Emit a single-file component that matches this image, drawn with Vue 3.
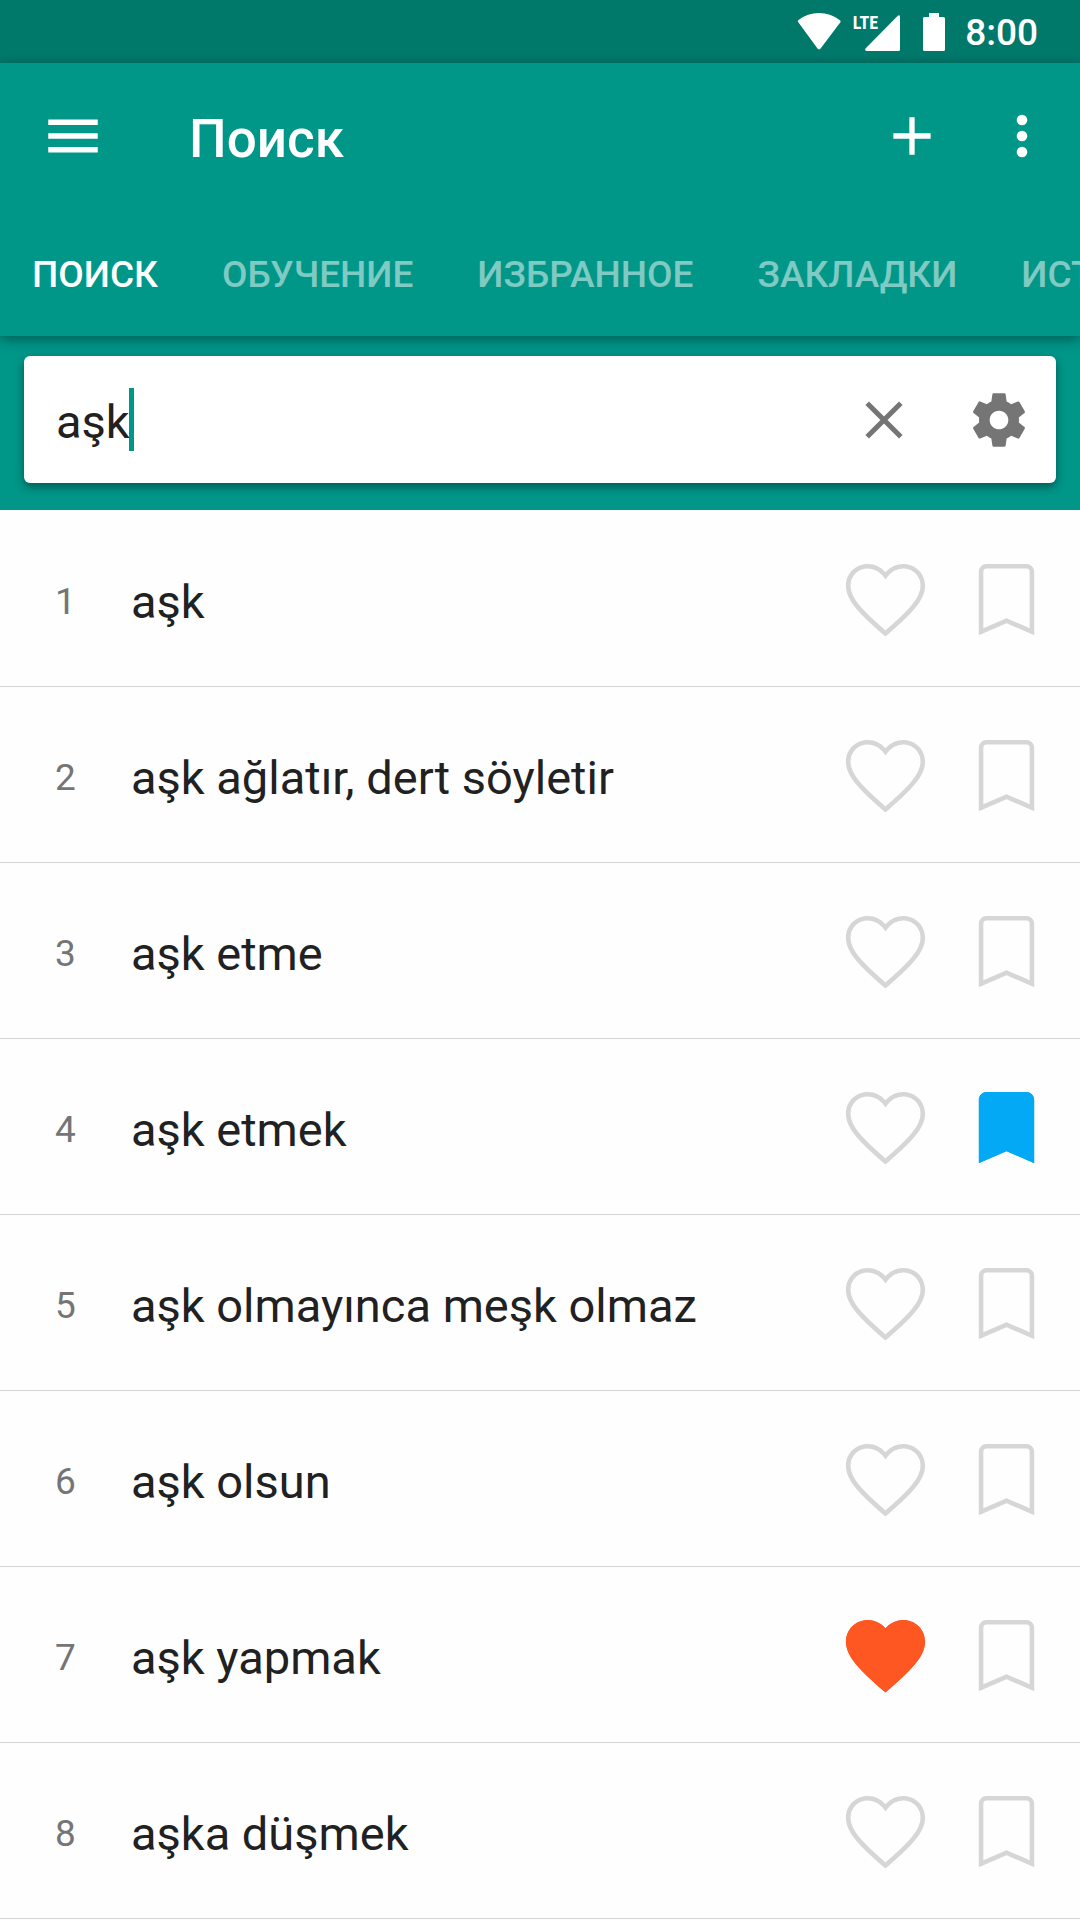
<script setup>
import { ref } from 'vue'

const query = ref('aşk')
const activeTab = ref('ПОИСК')
const tabs = ['ПОИСК', 'ОБУЧЕНИЕ', 'ИЗБРАННОЕ', 'ЗАКЛАДКИ', 'ИСТОРИЯ']

const words = ref([
  { text: 'aşk', liked: false, marked: false },
  { text: 'aşk ağlatır, dert söyletir', liked: false, marked: false },
  { text: 'aşk etme', liked: false, marked: false },
  { text: 'aşk etmek', liked: false, marked: true },
  { text: 'aşk olmayınca meşk olmaz', liked: false, marked: false },
  { text: 'aşk olsun', liked: false, marked: false },
  { text: 'aşk yapmak', liked: true, marked: false },
  { text: 'aşka düşmek', liked: false, marked: false },
])

const heart =
  'M12 21.35C5.4 15.6 2 12.28 2 8.5 2 5.42 4.42 3 7.5 3c1.74 0 3.41.81 4.5 2.09C13.09 3.81 14.76 3 16.5 3 19.58 3 22 5.42 22 8.5c0 3.78-3.4 7.1-10 12.85z'
const bookmark = 'M17 3H7C5.9 3 5 3.9 5 5v16l7-3 7 3V5c0-1.1-.9-2-2-2z'
</script>

<template>
  <div class="screen">
    <div class="status">
      <svg class="wifi" viewBox="0 0 44 37" aria-hidden="true">
        <path d="M1.5 9.500Q0 8.200 1.500 7Q10.500 0 22 0T42.500 7Q44.500 8.200 43 9.800L23.600 35.500Q22 37.200 20.500 35.500z" />
      </svg>
      <div class="signal">
        <span class="lte">LTE</span>
        <svg viewBox="0 0 35 36" aria-hidden="true">
          <path d="M35 1.500V34.500Q35 36 33.500 36H1.500Q-.500 35.500.500 33.500L32.800.800Q34.500-.500 35 1.500z" />
        </svg>
      </div>
      <svg class="battery" viewBox="0 0 22 38" aria-hidden="true">
        <path d="M6 0h10v4h4.500q1.500 0 1.500 1.500v31q0 1.500-1.500 1.500h-19q-1.500 0-1.500-1.500v-31q0-1.500 1.500-1.500h4.500z" />
      </svg>
      <span class="time">8:00</span>
    </div>

    <header class="appbar">
      <div class="toolbar">
        <button class="icon menu" aria-label="Меню">
          <svg viewBox="0 0 24 24"><path d="M3 18h18v-2H3v2zm0-5h18v-2H3v2zm0-7v2h18V6H3z" /></svg>
        </button>
        <h1>Поиск</h1>
        <button class="icon" aria-label="Добавить">
          <svg viewBox="0 0 24 24"><path d="M19 13h-6v6h-2v-6H5v-2h6V5h2v6h6v2z" /></svg>
        </button>
        <button class="icon" aria-label="Ещё">
          <svg viewBox="0 0 24 24">
            <circle cx="12" cy="6" r="2" />
            <circle cx="12" cy="12" r="2" />
            <circle cx="12" cy="18" r="2" />
          </svg>
        </button>
      </div>
      <nav class="tabs">
        <button
          v-for="tab in tabs"
          :key="tab"
          class="tab"
          :class="{ active: tab === activeTab }"
          @click="activeTab = tab"
        >{{ tab }}</button>
      </nav>
    </header>

    <section class="search">
      <div class="box">
        <div class="field">
          <input v-model="query" type="text" size="3" aria-label="Поиск" />
          <span class="caret"></span>
        </div>
        <button class="icon" aria-label="Очистить" @click="query = ''">
          <svg viewBox="0 0 24 24"><path d="M5.700 5.700L18.300 18.300M18.300 5.700L5.700 18.300" fill="none" stroke="currentColor" stroke-width="1.900" /></svg>
        </button>
        <button class="icon" aria-label="Настройки">
          <svg viewBox="0 0 24 24"><path d="M19.430 12.980c.04-.32.07-.64.07-.98s-.03-.66-.07-.98l2.110-1.650c.19-.15.24-.42.12-.64l-2-3.460c-.12-.22-.39-.3-.61-.22l-2.490 1c-.52-.4-1.080-.73-1.690-.98l-.38-2.650C14.460 2.180 14.250 2 14 2h-4c-.25 0-.46.18-.49.42l-.38 2.650c-.61.25-1.170.59-1.690.98l-2.490-1c-.23-.09-.49 0-.61.22l-2 3.460c-.13.22-.07.49.12.64l2.110 1.650c-.04.32-.07.65-.07.98s.03.66.07.98l-2.110 1.650c-.19.15-.24.42-.12.64l2 3.460c.12.22.39.3.61.22l2.490-1c.52.4 1.080.73 1.690.98l.38 2.650c.03.24.24.42.49.42h4c.25 0 .46-.18.49-.42l.38-2.650c.61-.25 1.170-.59 1.690-.98l2.490 1c.23.09.49 0 .61-.22l2-3.460c.12-.22.07-.49-.12-.64l-2.110-1.650zM12 15.500c-1.930 0-3.500-1.570-3.500-3.500s1.570-3.500 3.500-3.500 3.500 1.570 3.500 3.500-1.570 3.500-3.500 3.500z" /></svg>
        </button>
      </div>
    </section>

    <ul class="list">
      <li v-for="(word, i) in words" :key="word.text" class="row">
        <span class="num">{{ i + 1 }}</span>
        <span class="word">{{ word.text }}</span>
        <button
          class="mark"
          :class="{ liked: word.liked }"
          aria-label="Избранное"
          :aria-pressed="word.liked"
          @click="word.liked = !word.liked"
        >
          <svg viewBox="0 0 24 24">
            <clipPath :id="'heart' + i"><path :d="heart" /></clipPath>
            <path :d="heart" :clip-path="`url(#heart${i})`" />
          </svg>
        </button>
        <button
          class="mark"
          :class="{ marked: word.marked }"
          aria-label="Закладка"
          :aria-pressed="word.marked"
          @click="word.marked = !word.marked"
        >
          <svg viewBox="0 0 24 24">
            <clipPath :id="'bookmark' + i"><path :d="bookmark" /></clipPath>
            <path :d="bookmark" :clip-path="`url(#bookmark${i})`" />
          </svg>
        </button>
      </li>
    </ul>
  </div>
</template>

<style>
body {
  margin: 0;
  background: #fefefe;
}
</style>

<style scoped>
.screen {
  overflow: hidden;
  font-family: Roboto, "Noto Sans", sans-serif;
  color: #212121;
}

button {
  flex: none;
  margin: 0;
  padding: 0;
  border: 0;
  background: none;
  color: inherit;
  font: inherit;
  cursor: pointer;
}

svg {
  display: block;
  fill: currentColor;
}

.status {
  display: flex;
  align-items: center;
  justify-content: flex-end;
  box-sizing: border-box;
  height: 63px;
  padding-right: 42px;
  background: #00796b;
  color: #fff;
}

.wifi {
  width: 44px;
  height: 37px;
}

.signal {
  position: relative;
  margin: 2px 23px 0 24px;
}

.signal svg {
  width: 35px;
  height: 36px;
}

.lte {
  position: absolute;
  top: -4px;
  right: 22px;
  font: bold 18px/24px "Roboto Condensed", "Open Sans Condensed", "Liberation Sans Narrow", Roboto, sans-serif;
}

.battery {
  width: 22px;
  height: 38px;
}

.time {
  margin-left: 20px;
  padding-top: 3px;
  font-size: 37px;
  font-weight: 500;
  line-height: 44px;
}

.appbar {
  position: relative;
  background: #009688;
  color: #fff;
  box-shadow: 0 3px 12px rgba(0, 0, 0, 0.4);
}

.toolbar {
  display: flex;
  align-items: center;
  height: 146px;
  padding: 0 26px 0 40px;
}

.icon svg {
  width: 64px;
  height: 64px;
}

.menu svg {
  width: 66px;
  height: 66px;
}

h1 {
  flex: 1;
  margin: 0 0 0 83px;
  padding-top: 6px;
  font-size: 53px;
  font-weight: 500;
  line-height: 64px;
}

.toolbar .icon + .icon {
  margin-left: 46px;
}

.tabs {
  display: flex;
  height: 127px;
  overflow: hidden;
}

.tab {
  padding: 4px 32px 0;
  font-size: 37px;
  font-weight: 500;
  color: rgba(255, 255, 255, 0.5);
}

.active {
  color: #fff;
}

.search {
  padding: 20px 24px 27px;
  background: #009688;
}

.box {
  display: flex;
  align-items: center;
  gap: 51px;
  height: 127px;
  padding: 0 25px 0 32px;
  border-radius: 6px;
  background: #fff;
  color: #757575;
  box-shadow: 0 4px 10px rgba(0, 0, 0, 0.4);
}

.field {
  display: flex;
  flex: 1;
  align-items: center;
  min-width: 0;
}

input {
  field-sizing: content;
  padding: 4px 0 0;
  border: 0;
  outline: 0;
  background: none;
  color: #212121;
  font: 47px/60px Roboto, "Noto Sans", sans-serif;
}

.caret {
  width: 5px;
  height: 63px;
  margin-left: -1px;
  background: #009688;
}

.list {
  margin: 0;
  padding: 1px 0 0;
  list-style: none;
}

.row {
  display: flex;
  align-items: center;
  gap: 26px;
  box-sizing: border-box;
  height: 176px;
  padding-right: 26px;
  border-bottom: 1px solid #d4d4d4;
}

.num {
  width: 131px;
  margin-right: -26px;
  padding-top: 6px;
  text-align: center;
  font-size: 37px;
  line-height: 44px;
  color: #757575;
}

.word {
  flex: 1;
  padding-top: 6px;
  font-size: 47px;
  line-height: 60px;
}

.mark {
  padding-top: 2px;
}

.mark svg {
  width: 95px;
  height: 95px;
  fill: none;
  stroke: #d6d6d6;
  stroke-width: 2.3;
}

.liked svg {
  fill: #ff5722;
  stroke: #ff5722;
}

.marked svg {
  fill: #03a9f4;
  stroke: #03a9f4;
}
</style>
